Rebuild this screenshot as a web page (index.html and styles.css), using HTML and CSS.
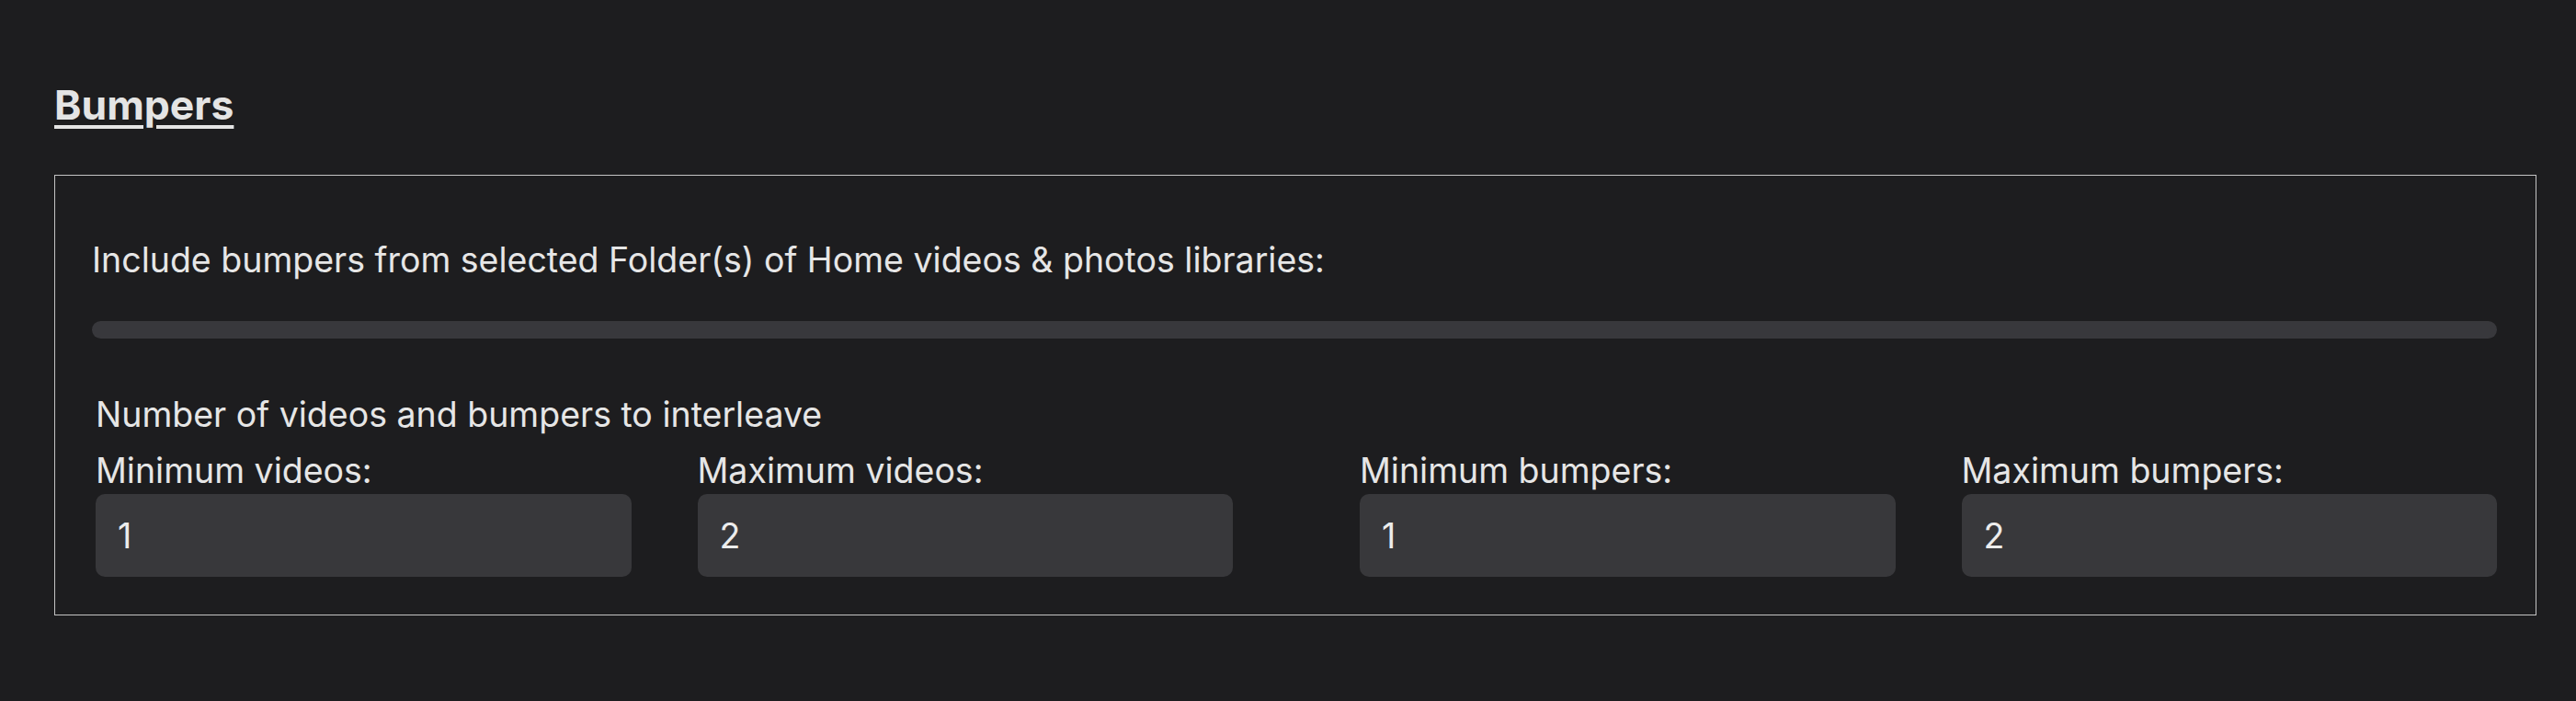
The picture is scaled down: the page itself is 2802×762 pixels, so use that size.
FILE: index.html
```html
<!DOCTYPE html>
<html lang="en">
<head>
<meta charset="utf-8">
<title>Bumpers</title>
<link rel="stylesheet" href="styles.css">
</head>
<body>
<main class="page">
  <h2 class="title">Bumpers</h2>
  <section class="box">
    <p class="desc">Include bumpers from selected Folder(s) of Home videos &amp; photos libraries:</p>
    <div class="bar"></div>
    <div class="interleave">
      <div class="caption">Number of videos and bumpers to interleave</div>
      <div class="groups">
        <div class="group">
          <label class="field">
            <span class="label">Minimum videos:</span>
            <input class="input" type="text" value="1">
          </label>
          <label class="field">
            <span class="label">Maximum videos:</span>
            <input class="input" type="text" value="2">
          </label>
        </div>
        <div class="group">
          <label class="field">
            <span class="label">Minimum bumpers:</span>
            <input class="input" type="text" value="1">
          </label>
          <label class="field">
            <span class="label">Maximum bumpers:</span>
            <input class="input" type="text" value="2">
          </label>
        </div>
      </div>
    </div>
  </section>
</main>
</body>
</html>
```
FILE: styles.css
```css
html, body {
  margin: 0;
  padding: 0;
  background: #1d1d1f;
}
body {
  font-family: Inter, "Noto Sans", sans-serif;
  color: #e6e6e6;
}
.page {
  padding: 96px 43px 60px 59px;
}
.title {
  margin: 0;
  font-size: 44.5px;
  font-weight: 700;
  line-height: 36px;
  text-decoration: underline;
  text-decoration-thickness: 4px;
  text-underline-offset: 6px;
  color: #e4e4e4;
  height: 94px;
  display: flex;
  align-items: flex-start;
}
.box {
  border: 1px solid #c4c4c4;
  padding: 70px 42px 41px 40px;
}
.desc {
  margin: 0;
  font-size: 37.5px;
  line-height: 44px;
}
.bar {
  margin-top: 44px;
  height: 19px;
  border-radius: 10px;
  background: #38383c;
}
.interleave {
  margin-top: 61px;
  padding-left: 4px;
}
.caption {
  font-size: 37.5px;
  line-height: 44px;
}
.groups {
  margin-top: 17px;
  display: flex;
  gap: 138px;
}
.group {
  flex: 1;
  display: flex;
  gap: 72px;
}
.field {
  flex: 1;
  display: flex;
  flex-direction: column;
  gap: 3px;
}
.label {
  font-size: 37.5px;
  line-height: 44px;
}
.input {
  box-sizing: border-box;
  height: 90px;
  width: 100%;
  border: none;
  border-radius: 10px;
  background: #38383b;
  color: #ececec;
  font-family: Inter, "Noto Sans", sans-serif;
  font-size: 37.5px;
  padding: 0 24px;
  outline: none;
}
```
